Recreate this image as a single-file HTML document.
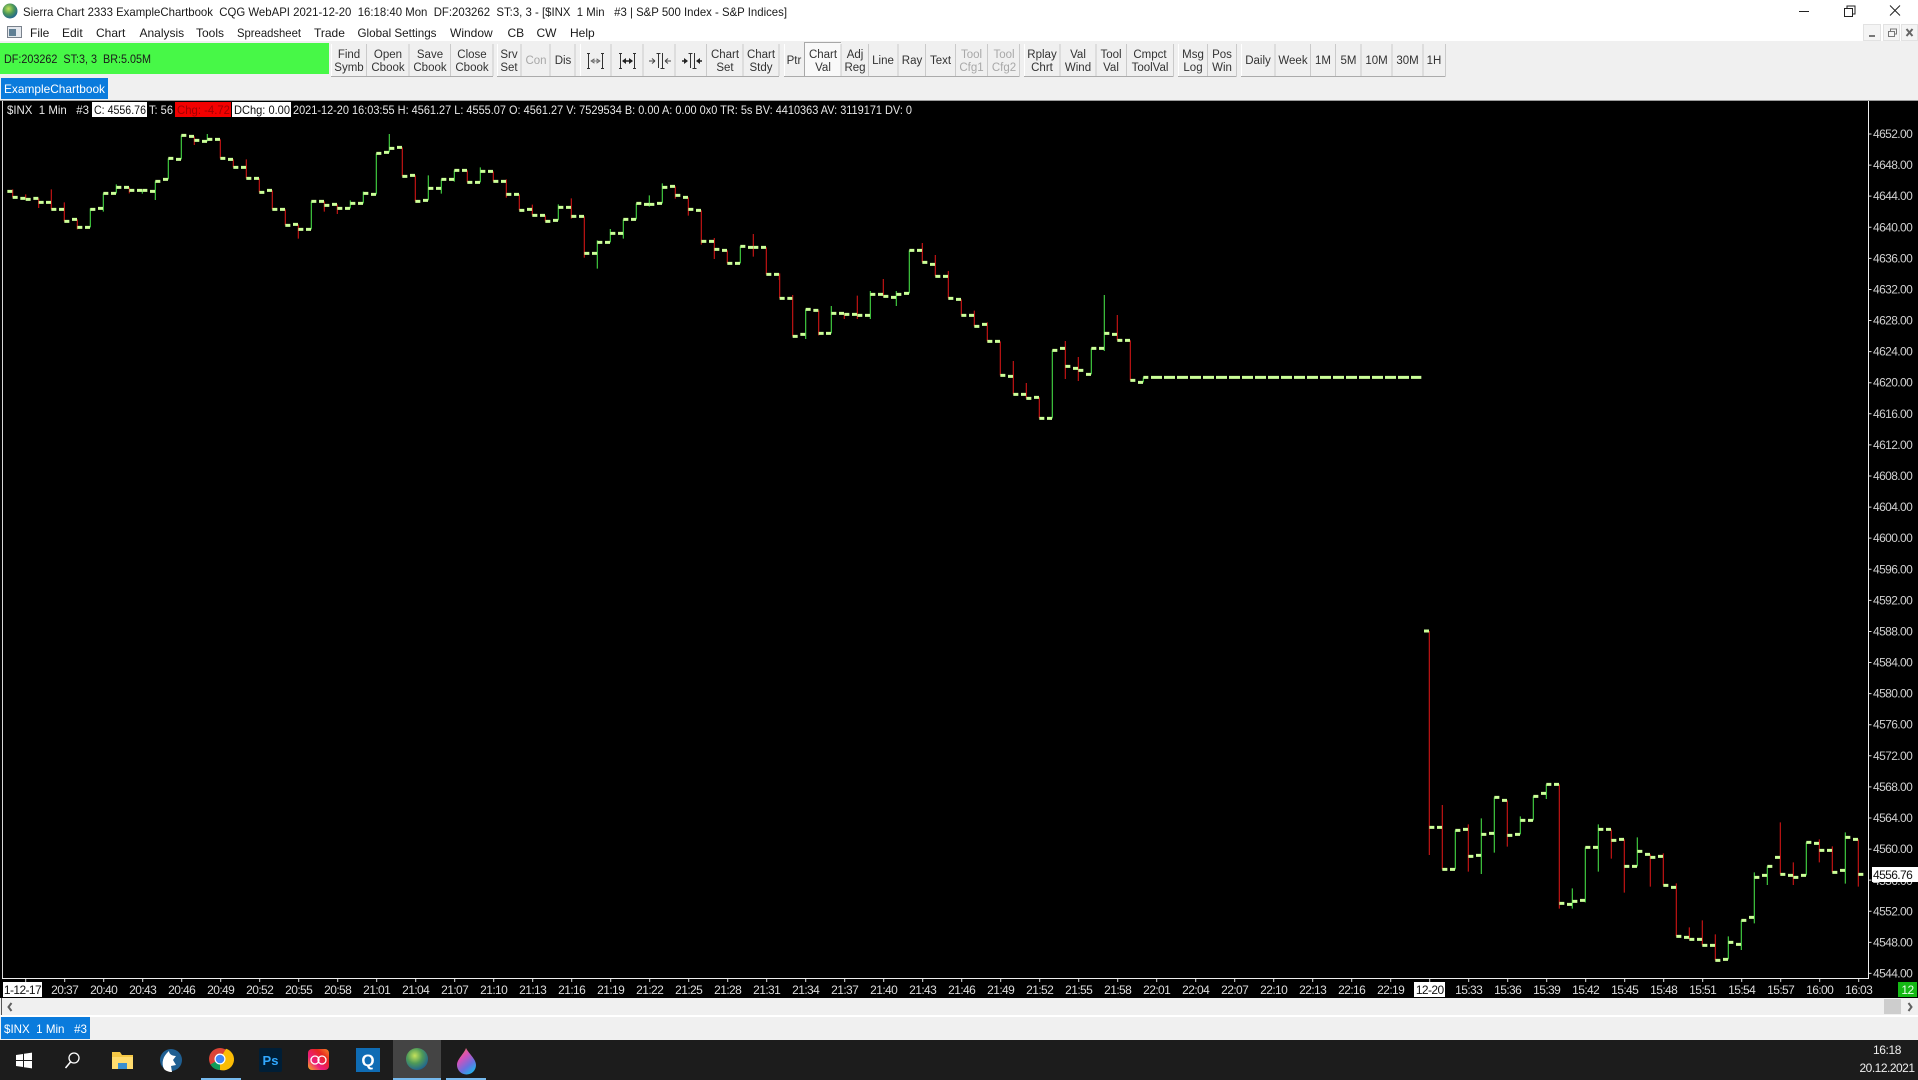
<!DOCTYPE html>
<html><head><meta charset="utf-8"><title>Sierra Chart</title>
<style>
html,body{margin:0;padding:0;background:#000;width:1918px;height:1080px;overflow:hidden}
svg{display:block}
text{font-family:"Liberation Sans",sans-serif;white-space:pre}
.m{font-size:12px;fill:#1a1a1a}
.b{font-size:11.5px;fill:#333;text-anchor:middle}
.d{font-size:11.5px;fill:#a8a8a8;text-anchor:middle}
.i{font-size:12px;fill:#e8e8e8}
.y{font-size:12px;fill:#d0d0d0;letter-spacing:-.6px}
.t{font-size:12px;fill:#dcdcdc;letter-spacing:-.6px;text-anchor:middle}
</style></head><body>
<svg width="1918" height="1080" viewBox="0 0 1918 1080" xmlns="http://www.w3.org/2000/svg">
<defs>
<radialGradient id="gl" cx=".4" cy=".35" r=".7"><stop offset="0" stop-color="#c4e25a"/><stop offset=".5" stop-color="#4f9a58"/><stop offset="1" stop-color="#1c5f96"/></radialGradient>
<linearGradient id="cc" x1="0" y1="1" x2="1" y2="0"><stop offset="0" stop-color="#f7b21b"/><stop offset=".35" stop-color="#ec1c7e"/><stop offset=".7" stop-color="#e8261f"/><stop offset="1" stop-color="#f58a2a"/></linearGradient>
<linearGradient id="dr" x1="0" y1="0" x2=".6" y2="1"><stop offset="0" stop-color="#f58a3c"/><stop offset=".4" stop-color="#d850b8"/><stop offset=".75" stop-color="#6a70e0"/><stop offset="1" stop-color="#2aa9e8"/></linearGradient>
</defs>
<!-- top -->
<rect width="1918" height="41" fill="#fff"/>
<rect y="41" width="1918" height="59" fill="#f0f0f0"/>
<rect y="100" width="1918" height="1" fill="#9c9c9c"/>
<circle cx="10" cy="11" r="7.5" fill="url(#gl)"/>
<text x="23" y="16" class="m" textLength="764" lengthAdjust="spacingAndGlyphs">Sierra Chart 2333 ExampleChartbook  CQG WebAPI 2021-12-20  16:18:40 Mon  DF:203262  ST:3, 3 - [$INX  1 Min   #3 | S&amp;P 500 Index - S&amp;P Indices]</text>
<path d="M1799 11.500h10" stroke="#222" fill="none"/>
<path d="M1844.500 8.500h8v8h-8zM1847 8.500v-2.500h8v8h-2.500" stroke="#222" fill="none"/>
<path d="M1890 5.500l10 10M1900 5.500l-10 10" stroke="#222" fill="none"/>
<!-- MDI buttons -->
<path d="M1863.500 24.500h17v16h-17zM1883.500 24.500h16v16h-16zM1901.500 24.500h16v16h-16z" fill="#f4f4f4" stroke="#e2e2e2"/>
<path d="M1869 36h6" stroke="#777" stroke-width="2"/>
<path d="M1888.500 31.500h6v5h-6zM1890.500 31v-2h6v5h-2" stroke="#777" fill="none"/>
<path d="M1906.500 29l6 7M1912.500 29l-6 7" stroke="#666" stroke-width="2"/>
<!-- menu -->
<rect x="7.500" y="26.500" width="14" height="11" fill="#e4e8ee" stroke="#7a828c"/>
<rect x="9" y="29" width="7" height="7" fill="#5f7f94"/>
<text x="30" y="37" class="m">File</text>
<text x="62" y="37" class="m">Edit</text>
<text x="96" y="37" class="m">Chart</text>
<text x="139.500" y="37" class="m">Analysis</text>
<text x="196" y="37" class="m">Tools</text>
<text x="237" y="37" class="m" textLength="64" lengthAdjust="spacingAndGlyphs">Spreadsheet</text>
<text x="314" y="37" class="m">Trade</text>
<text x="357.500" y="37" class="m" textLength="79" lengthAdjust="spacingAndGlyphs">Global Settings</text>
<text x="450" y="37" class="m">Window</text>
<text x="507.500" y="37" class="m">CB</text>
<text x="536.500" y="37" class="m">CW</text>
<text x="570" y="37" class="m">Help</text>
<!-- DF panel -->
<rect x="0" y="43" width="329" height="31" fill="#47f847"/>
<text x="4" y="63" class="m" fill="#143" textLength="147" lengthAdjust="spacingAndGlyphs">DF:203262  ST:3, 3  BR:5.05M</text>
<!-- toolbar borders -->
<rect x="804" y="42" width="37" height="34" fill="#f9f9f9"/>
<path d="M331 76.500H493M497 76.500H779M784 76.500H1019.500M1024 76.500H1173.500M1178 76.500H1236.500M1241 76.500H1445.500" stroke="#ababab" fill="none"/>
<path d="M366.500 44V76M409 44V76M450.500 44V76M493 44V76M521 44V76M550 44V76M575 44V76M611 44V76M643 44V76M675 44V76M706.500 44V76M743 44V76M779 44V76M841 44V76M868.500 44V76M898 44V76M925.500 44V76M955.500 44V76M987.500 44V76M1019.500 44V76M1060 44V76M1096 44V76M1126.500 44V76M1173.500 44V76M1207.500 44V76M1236.500 44V76M1275 44V76M1310.500 44V76M1335.500 44V76M1361 44V76M1392 44V76M1423 44V76M1445.500 44V76" stroke="#cacaca" fill="none"/>
<path d="M804.500 76V42.500H841" stroke="#a8a8a8" fill="none"/>
<path d="M331 44V76M497 44V76M580 44V76M784 44V76M1024 44V76M1178 44V76M1241 44V76" stroke="#fff" fill="none" transform="translate(.5,0)"/>
<text x="349" y="58" class="b">Find</text><text x="349" y="71" class="b">Symb</text>
<text x="388" y="58" class="b">Open</text><text x="388" y="71" class="b">Cbook</text>
<text x="430" y="58" class="b">Save</text><text x="430" y="71" class="b">Cbook</text>
<text x="472" y="58" class="b">Close</text><text x="472" y="71" class="b">Cbook</text>
<text x="509" y="58" class="b">Srv</text><text x="509" y="71" class="b">Set</text>
<text x="536" y="64" class="d">Con</text>
<text x="563" y="64" class="b">Dis</text>
<!-- icons -->
<path d="M587 53.500h3M587 68.500h3M588.500 53v16M601 53.500h3M601 68.500h3M602.500 53v16" stroke="#333" fill="none"/>
<path d="M591 61h9M591 61l3-2v4zM600 61l-3-2v4z" stroke="#666" fill="none" stroke-width=".8"/>
<path d="M619 53.500h3M619 68.500h3M620.500 53v16M633 53.500h3M633 68.500h3M634.500 53v16" stroke="#333" fill="none"/>
<path d="M623 61h9" stroke="#222" stroke-width="1.500"/><path d="M622 61l4-3v6zM633 61l-4-3v6z" fill="#222"/>
<path d="M649 61h6M655 61l-3-2.500M655 61l-3 2.500M671 61h-6M665 61l3-2.500M665 61l3 2.500" stroke="#444" fill="none"/>
<path d="M658.500 53v15M662.500 53v15M656.500 53.500h4M660.500 68.500h4" stroke="#333" fill="none"/>
<path d="M682 61h4M702 61h-4" stroke="#222" stroke-width="1.500"/><path d="M688 61l-4-3v6zM696 61l4-3v6z" fill="#222"/>
<path d="M690.500 53v15M694.500 53v15M688.500 53.500h4M692.500 68.500h4" stroke="#333" fill="none"/>
<text x="725" y="58" class="b">Chart</text><text x="725" y="71" class="b">Set</text>
<text x="761" y="58" class="b">Chart</text><text x="761" y="71" class="b">Stdy</text>
<text x="794" y="64" class="b">Ptr</text>
<text x="823" y="58" class="b">Chart</text><text x="823" y="71" class="b">Val</text>
<text x="855" y="58" class="b">Adj</text><text x="855" y="71" class="b">Reg</text>
<text x="883" y="64" class="b">Line</text>
<text x="912" y="64" class="b">Ray</text>
<text x="940.500" y="64" class="b">Text</text>
<text x="971.500" y="58" class="d">Tool</text><text x="971.500" y="71" class="d">Cfg1</text>
<text x="1004" y="58" class="d">Tool</text><text x="1004" y="71" class="d">Cfg2</text>
<text x="1042" y="58" class="b">Rplay</text><text x="1042" y="71" class="b">Chrt</text>
<text x="1078" y="58" class="b">Val</text><text x="1078" y="71" class="b">Wind</text>
<text x="1111" y="58" class="b">Tool</text><text x="1111" y="71" class="b">Val</text>
<text x="1150" y="58" class="b">Cmpct</text><text x="1150" y="71" class="b">ToolVal</text>
<text x="1193" y="58" class="b">Msg</text><text x="1193" y="71" class="b">Log</text>
<text x="1222" y="58" class="b">Pos</text><text x="1222" y="71" class="b">Win</text>
<text x="1258" y="64" class="b">Daily</text>
<text x="1293" y="64" class="b">Week</text>
<text x="1323" y="64" class="b">1M</text>
<text x="1348.500" y="64" class="b">5M</text>
<text x="1376.500" y="64" class="b">10M</text>
<text x="1407.500" y="64" class="b">30M</text>
<text x="1434" y="64" class="b">1H</text>
<!-- chartbook tab -->
<rect x="1" y="78" width="107" height="21" fill="#0a7bdc"/>
<text x="4" y="93" class="i" style="fill:#fff" textLength="101" lengthAdjust="spacingAndGlyphs">ExampleChartbook</text>
<!-- chart area -->
<rect y="101" width="1918" height="897" fill="#000"/>
<rect x="2" y="101" width="1" height="878" fill="#d8d8d8"/>
<rect x="1868" y="101" width="1" height="878" fill="#eee"/>
<rect x="2" y="978" width="1867" height="1" fill="#eee"/>
<path d="M1870 133.500V975" stroke="#ddd" stroke-width="3" stroke-dasharray="1 30.090" fill="none"/>
<path d="M25.200 980.500H1866" stroke="#ddd" stroke-width="3" stroke-dasharray="1 38" fill="none"/>
<!-- info bar -->
<text x="7" y="114" class="i" textLength="82" lengthAdjust="spacingAndGlyphs">$INX  1 Min   #3</text>
<rect x="92" y="102" width="55" height="15" fill="#fff"/>
<text x="94" y="114" class="i" style="fill:#111" textLength="52" lengthAdjust="spacingAndGlyphs">C: 4556.76</text>
<text x="149" y="114" class="i" textLength="24" lengthAdjust="spacingAndGlyphs">T: 56</text>
<rect x="175" y="102" width="56" height="15" fill="#f20000"/>
<text x="177" y="114" class="i" style="fill:#a00000" textLength="53" lengthAdjust="spacingAndGlyphs">Chg: -4.72</text>
<rect x="232" y="102" width="59" height="15" fill="#fff"/>
<text x="234" y="114" class="i" style="fill:#111" textLength="56" lengthAdjust="spacingAndGlyphs">DChg: 0.00</text>
<text x="293" y="114" class="i" textLength="619" lengthAdjust="spacingAndGlyphs">2021-12-20 16:03:55 H: 4561.27 L: 4555.07 O: 4561.27 V: 7529534 B: 0.00 A: 0.00 0x0 TR: 5s BV: 4410363 AV: 3119171 DV: 0</text>
<!-- bars zone 1 -->
<g transform="translate(0,120) scale(.33333)" fill="none">
<path stroke="#c01414" stroke-width="3.600" d="M38 208V232M77 223V238M116 235V264M154 208V268M193 247V304M232 298V328M388 202V220M583 49V75M661 58V115M700 118V142M739 118V175M778 175V217M817 211V268M856 268V316M895 313V356M973 244V275M1012 253V282"/>
<path stroke="#3fc83f" stroke-width="3.600" d="M271 265V322M310 220V275M349 193V220M427 211V221M466 184V240M505 115V178M544 46V118M622 42V64M934 244V328M1051 241V265M1090 215V250M1129 100V223M1168 42V97"/>
<path stroke="#ccff99" stroke-width="9" d="M22 214h15M38 232h15M61 235h15M77 238h15M100 235h15M116 247h15M138 247h15M154 268h15M177 268h15M193 304h15M216 298h15M232 322h15M255 322h15M271 268h15M294 265h15M310 220h15M333 220h15M349 202h15M372 202h15M388 211h15M411 211h15M427 211h15M450 214h15M466 184h15M489 178h15M505 115h15M528 118h15M544 46h15M567 49h15M583 61h15M606 64h15M622 58h15M645 58h15M661 115h15M684 118h15M700 142h15M723 142h15M739 175h15M762 175h15M778 217h15M801 211h15M817 268h15M840 268h15M856 316h15M879 313h15M895 328h15M918 328h15M934 244h15M957 244h15M973 256h15M996 253h15M1012 265h15M1035 265h15M1051 250h15M1074 250h15M1090 220h15M1113 223h15M1129 100h15M1152 97h15M1168 85h15"/>
</g>
<!-- bars zone 2 -->
<g transform="translate(400,120) scale(.33333)" fill="none">
<path stroke="#c01414" stroke-width="3.600" d="M7 82V169M46 166V244M202 151V187M280 154V184M319 178V233M358 223V271M397 254V286M436 286V304M514 235V296M553 289V413M826 199V236M865 232V287M904 271V374M943 354V417M982 391V430M1060 342V410M1099 382V463M1138 463V480"/>
<path stroke="#3fc83f" stroke-width="3.600" d="M85 166V241M124 178V221M163 151V185M241 142V187M475 253V301M592 361V446M631 327V367M670 298V356M709 250V298M748 226V260M787 190V250M1021 379V430"/>
<path stroke="#ccff99" stroke-width="9" d="M-9 82h15M7 169h15M30 166h15M46 244h15M69 241h15M85 205h15M108 205h15M124 178h15M147 178h15M163 151h15M186 151h15M202 187h15M225 187h15M241 154h15M264 154h15M280 184h15M303 184h15M319 223h15M342 223h15M358 271h15M381 268h15M397 286h15M420 286h15M436 304h15M459 301h15M475 262h15M498 262h15M514 289h15M537 289h15M553 400h15M576 400h15M592 367h15M615 367h15M631 340h15M654 340h15M670 298h15M693 298h15M709 250h15M732 253h15M748 253h15M771 250h15M787 202h15M810 199h15M826 226h15M849 232h15M865 268h15M888 271h15M904 364h15M927 364h15M943 388h15M966 391h15M982 430h15M1005 430h15M1021 379h15M1044 382h15M1060 382h15M1083 382h15M1099 463h15M1122 463h15"/>
</g>
<!-- bars zone 3 -->
<g transform="translate(780,230) scale(.33333)" fill="none">
<path stroke="#c01414" stroke-width="3.600" d="M-1 130V205M38 195V319M116 241V316M193 250V267M232 197V267M310 147V199M427 39V97M466 75V139M505 123V205M544 208V256M583 242V289M622 277V334M661 334V436M700 393V493M739 459V505M778 502V565M856 333V447M895 381V453M1012 255V331M1051 331V451"/>
<path stroke="#3fc83f" stroke-width="3.600" d="M77 238V327M154 228V310M271 183V267M349 183V228M388 61V190M817 361V565M934 355V433M973 195V363M1090 442V457"/>
<path stroke="#ccff99" stroke-width="9" d="M-1 205h15M22 205h15M38 319h15M61 313h15M77 238h15M100 241h15M116 310h15M138 310h15M154 250h15M177 250h15M193 253h15M216 253h15M232 256h15M255 256h15M271 193h15M294 193h15M310 199h15M333 202h15M349 193h15M372 190h15M388 61h15M411 61h15M427 97h15M450 103h15M466 139h15M489 139h15M505 205h15M528 208h15M544 256h15M567 256h15M583 289h15M606 283h15M622 334h15M645 334h15M661 436h15M684 439h15M700 493h15M723 493h15M739 505h15M762 502h15M778 565h15M801 565h15M817 361h15M840 355h15M856 409h15M879 415h15M895 421h15M918 433h15M934 355h15M957 355h15M973 310h15M996 313h15M1012 331h15M1035 331h15M1051 451h15M1074 457h15M1090 442h15"/>
<path stroke="#ccff99" stroke-width="9" stroke-dasharray="33 6" d="M1113 442H1924"/>
</g>
<!-- bars zone 4 -->
<g transform="translate(1400,760) scale(.33333)" fill="none">
<path stroke="#c01414" stroke-width="3.600" d="M88 -387V285M127 135V328M205 193V335M322 121V260M478 73V446M634 208V296M673 238V398M751 283V380M790 280V376M829 370V529M868 502V538M907 481V556M946 523V601M1141 187V343M1180 307V375M1258 238V307M1297 259V337M1375 238V380"/>
<path stroke="#3fc83f" stroke-width="3.600" d="M166 211V328M244 175V342M283 112V278M361 169V223M400 109V181M439 73V117M517 385V446M556 262V427M595 193V335M712 232V319M985 529V598M1024 481V570M1063 337V490M1102 319V375M1219 247V346M1336 217V371"/>
<path stroke="#ccff99" stroke-width="9" d="M72 -387h15M88 202h15M111 202h15M127 328h15M150 328h15M166 211h15M189 208h15M205 289h15M228 286h15M244 223h15M267 220h15M283 112h15M306 121h15M322 226h15M345 223h15M361 181h15M384 181h15M400 109h15M423 100h15M439 73h15M462 73h15M478 430h15M501 433h15M517 424h15M540 421h15M556 262h15M579 262h15M595 208h15M618 208h15M634 241h15M657 238h15M673 319h15M696 319h15M712 274h15M735 283h15M751 292h15M774 289h15M790 376h15M813 382h15M829 529h15M852 532h15M868 538h15M891 538h15M907 556h15M930 556h15M946 601h15M969 598h15M985 547h15M1008 553h15M1024 481h15M1047 472h15M1063 352h15M1086 346h15M1102 319h15M1125 292h15M1141 343h15M1164 346h15M1180 352h15M1203 346h15M1219 247h15M1242 250h15M1258 271h15M1281 271h15M1297 337h15M1320 331h15M1336 232h15M1359 238h15M1375 343h15"/>
</g>
<!-- y axis -->
<text x="1873" y="138" class="y">4652.00</text>
<text x="1873" y="169.100" class="y">4648.00</text>
<text x="1873" y="200.200" class="y">4644.00</text>
<text x="1873" y="231.300" class="y">4640.00</text>
<text x="1873" y="262.400" class="y">4636.00</text>
<text x="1873" y="293.500" class="y">4632.00</text>
<text x="1873" y="324.500" class="y">4628.00</text>
<text x="1873" y="355.600" class="y">4624.00</text>
<text x="1873" y="386.700" class="y">4620.00</text>
<text x="1873" y="417.800" class="y">4616.00</text>
<text x="1873" y="448.900" class="y">4612.00</text>
<text x="1873" y="480" class="y">4608.00</text>
<text x="1873" y="511.100" class="y">4604.00</text>
<text x="1873" y="542.200" class="y">4600.00</text>
<text x="1873" y="573.300" class="y">4596.00</text>
<text x="1873" y="604.400" class="y">4592.00</text>
<text x="1873" y="635.400" class="y">4588.00</text>
<text x="1873" y="666.500" class="y">4584.00</text>
<text x="1873" y="697.600" class="y">4580.00</text>
<text x="1873" y="728.700" class="y">4576.00</text>
<text x="1873" y="759.800" class="y">4572.00</text>
<text x="1873" y="790.900" class="y">4568.00</text>
<text x="1873" y="822" class="y">4564.00</text>
<text x="1873" y="853.100" class="y">4560.00</text>
<text x="1873" y="885" class="y">4556.00</text>
<text x="1873" y="915.300" class="y">4552.00</text>
<text x="1873" y="946.300" class="y">4548.00</text>
<text x="1873" y="977.400" class="y">4544.00</text>
<rect x="1872" y="867" width="46" height="15" fill="#fff"/>
<text x="1873" y="879" class="y" style="fill:#111">4556.76</text>
<!-- time axis -->
<rect x="3" y="982" width="39" height="15" fill="#fff"/>
<text x="22.500" y="994" class="t" style="fill:#111">1-12-17</text>
<text x="64.700" y="994" class="t">20:37</text><text x="103.700" y="994" class="t">20:40</text><text x="142.700" y="994" class="t">20:43</text><text x="181.700" y="994" class="t">20:46</text><text x="220.700" y="994" class="t">20:49</text><text x="259.700" y="994" class="t">20:52</text><text x="298.700" y="994" class="t">20:55</text><text x="337.700" y="994" class="t">20:58</text><text x="376.700" y="994" class="t">21:01</text><text x="415.700" y="994" class="t">21:04</text><text x="454.700" y="994" class="t">21:07</text><text x="493.700" y="994" class="t">21:10</text><text x="532.700" y="994" class="t">21:13</text><text x="571.700" y="994" class="t">21:16</text><text x="610.700" y="994" class="t">21:19</text><text x="649.700" y="994" class="t">21:22</text><text x="688.700" y="994" class="t">21:25</text><text x="727.700" y="994" class="t">21:28</text><text x="766.700" y="994" class="t">21:31</text><text x="805.700" y="994" class="t">21:34</text><text x="844.700" y="994" class="t">21:37</text><text x="883.700" y="994" class="t">21:40</text><text x="922.700" y="994" class="t">21:43</text><text x="961.700" y="994" class="t">21:46</text><text x="1000.700" y="994" class="t">21:49</text><text x="1039.700" y="994" class="t">21:52</text><text x="1078.700" y="994" class="t">21:55</text><text x="1117.700" y="994" class="t">21:58</text><text x="1156.700" y="994" class="t">22:01</text><text x="1195.700" y="994" class="t">22:04</text><text x="1234.700" y="994" class="t">22:07</text><text x="1273.700" y="994" class="t">22:10</text><text x="1312.700" y="994" class="t">22:13</text><text x="1351.700" y="994" class="t">22:16</text><text x="1390.700" y="994" class="t">22:19</text>
<rect x="1414" y="982" width="31" height="15" fill="#fff"/>
<text x="1429.700" y="994" class="t" style="fill:#111">12-20</text>
<text x="1468.700" y="994" class="t">15:33</text><text x="1507.700" y="994" class="t">15:36</text><text x="1546.700" y="994" class="t">15:39</text><text x="1585.700" y="994" class="t">15:42</text><text x="1624.700" y="994" class="t">15:45</text><text x="1663.700" y="994" class="t">15:48</text><text x="1702.700" y="994" class="t">15:51</text><text x="1741.700" y="994" class="t">15:54</text><text x="1780.700" y="994" class="t">15:57</text><text x="1819.700" y="994" class="t">16:00</text><text x="1858.700" y="994" class="t">16:03</text>
<rect x="1898" y="982" width="19" height="15" fill="#14b814"/>
<text x="1907.500" y="994" class="t" style="fill:#e8ffe8">12</text>
<!-- scrollbar -->
<rect y="998" width="1918" height="17" fill="#f0f0f0"/>
<rect x="1" y="998" width="1" height="17" fill="#555"/>
<path d="M11.500 1003l-3 4 3 4" stroke="#606060" stroke-width="2" fill="none"/>
<rect x="1884" y="999" width="17" height="15" fill="#cdcdcd"/>
<path d="M1908.500 1003l3 4-3 4" stroke="#606060" stroke-width="2" fill="none"/>
<rect y="1015" width="1918" height="2" fill="#fff"/>
<rect y="1017" width="1918" height="23" fill="#f0f0f0"/>
<rect x="1" y="1017" width="89" height="22" fill="#0a7bdc"/>
<text x="4" y="1033" class="i" style="fill:#fff" textLength="83" lengthAdjust="spacingAndGlyphs">$INX  1 Min   #3</text>
<!-- taskbar -->
<rect y="1040" width="1918" height="40" fill="#1c1c1c"/>
<rect x="393" y="1040" width="48" height="40" fill="#444"/>
<path d="M201 1078h40v2h-40zM393 1078h48v2h-48zM446 1078h40v2h-40z" fill="#76b9ed"/>
<path d="M16 1055l7-1v6h-7zM24 1053.800l8-1.200V1060h-8zM16 1061h7v6l-7-1zM24 1061h8v7.400l-8-1.200z" fill="#fff"/>
<circle cx="74" cy="1058" r="5" fill="none" stroke="#fff" stroke-width="1.300"/><path d="M70.500 1062l-5 6" stroke="#fff" stroke-width="1.500"/>
<path d="M112 1052h8l2 3h11v14h-21z" fill="#f5c846"/><rect x="112" y="1057" width="21" height="12" fill="#ffdc6e"/><rect x="118" y="1063" width="9" height="6" fill="#3a8fd0"/>
<circle cx="171" cy="1060" r="11" fill="#1f5f92"/><path d="M164 1069c-3-6-1-13 5-18 0 3 3 5 7 5l-3 4 3 5-5 1 1 6c-3 0-6-1-8-3z" fill="#fff"/>
<circle cx="220" cy="1059" r="11" fill="#db4437"/><path d="M220 1059L210.500 1064.500A11 11 0 0 0 220 1070L226 1059z" fill="#0f9d58"/><path d="M220 1059L226 1048.800A11 11 0 0 1 220 1070z" fill="#fbbc05"/><circle cx="220" cy="1059" r="5.500" fill="#fff"/><circle cx="220" cy="1059" r="4.300" fill="#4285f4"/>
<rect x="259" y="1048" width="23" height="24" rx="2" fill="#001e36"/>
<text x="270.500" y="1065" style="font-size:13px;font-weight:bold;fill:#31a8ff;text-anchor:middle">Ps</text>
<rect x="308" y="1049" width="21" height="21" rx="4" fill="url(#cc)"/>
<circle cx="315" cy="1060" r="4" fill="none" stroke="#fff" stroke-width="1.300"/><circle cx="322" cy="1060" r="4" fill="none" stroke="#fff" stroke-width="1.300"/>
<rect x="356" y="1048" width="24" height="24" fill="#0f6cb4"/>
<text x="368" y="1066" style="font-size:17px;font-weight:bold;fill:#fff;text-anchor:middle">Q</text>
<circle cx="417" cy="1059" r="11" fill="url(#gl)"/>
<path d="M466 1048c3 6 10 11 10 17a9.500 9.500 0 0 1-19 0c0-6 7-11 9-17z" fill="url(#dr)"/>
<text x="1887" y="1054" style="font-size:12px;fill:#eee;text-anchor:middle;letter-spacing:-.4px">16:18</text>
<text x="1887" y="1072" style="font-size:12px;fill:#eee;text-anchor:middle;letter-spacing:-.5px">20.12.2021</text>
</svg>
</body></html>
